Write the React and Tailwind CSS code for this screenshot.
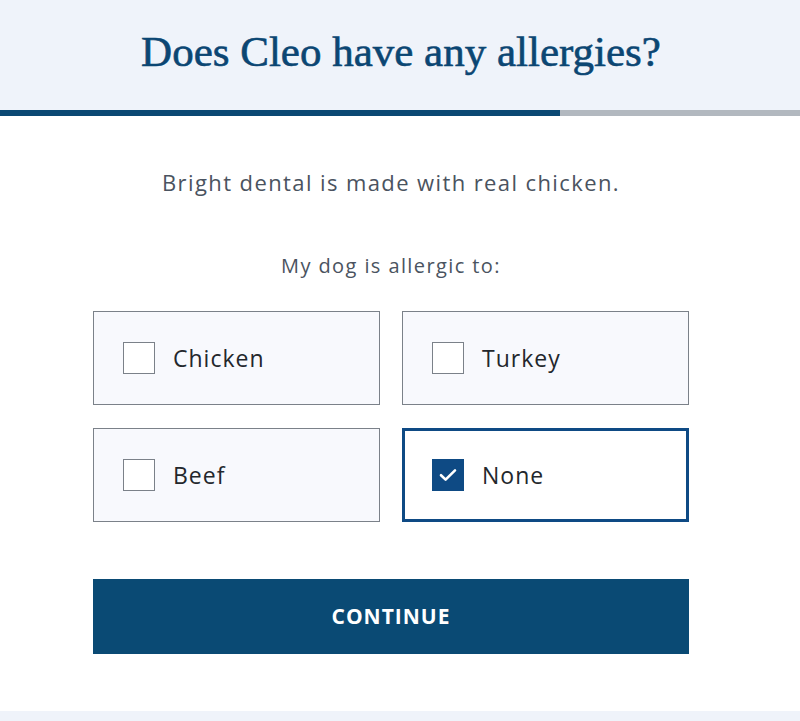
import React from "react";

function Option({ label, checked }) {
  return (
    <div
      className={
        "flex items-center h-[94px] " +
        (checked
          ? "border-[3px] border-[#0e4a84] bg-white pl-[27px]"
          : "border border-[#7b8189] bg-[#f8f9fd] pl-[29px]")
      }
    >
      <div
        className={
          "w-[32px] h-[32px] flex items-center justify-center " +
          (checked ? "bg-[#0e4a84]" : "border border-[#7b8189] bg-white")
        }
      >
        {checked && (
          <svg width="18" height="14" viewBox="0 0 18 14" fill="none">
            <path d="M2 7.2 L6.6 11.6 L16 2.4" stroke="white" strokeWidth="2.6" strokeLinecap="round" strokeLinejoin="round" />
          </svg>
        )}
      </div>
      <span className="ml-[18px] text-[23px] font-medium tracking-[1px] text-[#23272c]">{label}</span>
    </div>
  );
}

export default function App() {
  return (
    <div className="w-[800px] h-[721px] bg-white flex flex-col" style={{ fontFamily: '"Open Sans", "Liberation Sans", sans-serif' }}>
      <div className="h-[110px] bg-[#eff3fa] flex items-center justify-center">
        <h1
          className="text-[43px] text-[#0b4673] pb-[6px] pl-[2px]"
          style={{ fontFamily: '"Liberation Serif", "DejaVu Serif", serif', WebkitTextStroke: "0.6px #0b4673" }}
        >
          Does Cleo have any allergies?
        </h1>
      </div>
      <div className="flex h-[6px]">
        <div className="w-[560px] bg-[#0b4873]" />
        <div className="flex-1 bg-[#b2b8bf]" />
      </div>
      <div className="flex-1 flex flex-col items-center pr-[18px]">
        <p className="mt-[51px] text-[22px] font-medium tracking-[1.4px] text-[#4a5360] leading-[30px]">
          Bright dental is made with real chicken.
        </p>
        <p className="mt-[56px] text-[20px] font-medium tracking-[1.4px] text-[#4a5360] leading-[26px]">
          My dog is allergic to:
        </p>
        <div className="mt-[32px] w-[596px] grid grid-cols-2 gap-x-[22px] gap-y-[23px]">
          <Option label="Chicken" />
          <Option label="Turkey" />
          <Option label="Beef" />
          <Option label="None" checked />
        </div>
        <button className="mt-[57px] w-[596px] h-[75px] bg-[#0a4a74] text-white text-[21px] font-bold tracking-[1px]">
          CONTINUE
        </button>
      </div>
      <div className="h-[10px] bg-[#eff3fa]" />
    </div>
  );
}
